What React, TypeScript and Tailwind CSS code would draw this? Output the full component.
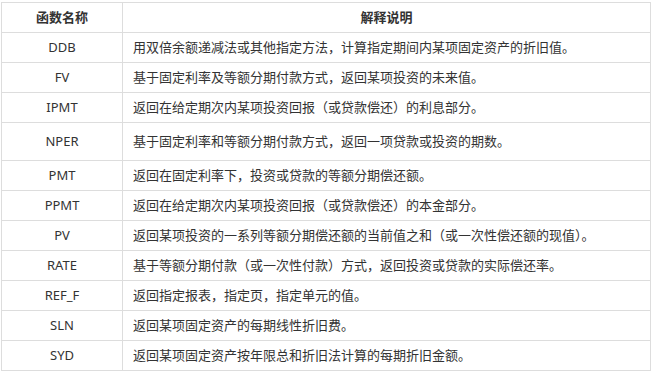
const rows: { name: string; desc: string; tall?: boolean }[] = [
  { name: "DDB", desc: "用双倍余额递减法或其他指定方法，计算指定期间内某项固定资产的折旧值。" },
  { name: "FV", desc: "基于固定利率及等额分期付款方式，返回某项投资的未来值。" },
  { name: "IPMT", desc: "返回在给定期次内某项投资回报（或贷款偿还）的利息部分。" },
  { name: "NPER", desc: "基于固定利率和等额分期付款方式，返回一项贷款或投资的期数。", tall: true },
  { name: "PMT", desc: "返回在固定利率下，投资或贷款的等额分期偿还额。" },
  { name: "PPMT", desc: "返回在给定期次内某项投资回报（或贷款偿还）的本金部分。" },
  { name: "PV", desc: "返回某项投资的一系列等额分期偿还额的当前值之和（或一次性偿还额的现值）。" },
  { name: "RATE", desc: "基于等额分期付款（或一次性付款）方式，返回投资或贷款的实际偿还率。" },
  { name: "REF_F", desc: "返回指定报表，指定页，指定单元的值。" },
  { name: "SLN", desc: "返回某项固定资产的每期线性折旧费。" },
  { name: "SYD", desc: "返回某项固定资产按年限总和折旧法计算的每期折旧金额。" },
];

export default function App() {
  return (
    <div className="h-[371px] w-[652px] bg-white pl-px pt-[2px] font-['Noto_Sans','Noto_Sans_CJK_SC',sans-serif] text-[13px] text-[#333]">
      <table className="w-[650px] table-fixed border-collapse">
        <colgroup>
          <col className="w-[121px]" />
          <col />
        </colgroup>
        <thead>
          <tr className="h-[30px]">
            <th className="border border-[#ddd] p-0 text-center font-bold">函数名称</th>
            <th className="border border-[#ddd] p-0 text-center font-bold">解释说明</th>
          </tr>
        </thead>
        <tbody>
          {rows.map((row) => (
            <tr key={row.name} className={row.tall ? "h-[38px]" : "h-[30px]"}>
              <td className="border border-[#ddd] p-0 text-center">{row.name}</td>
              <td className="border border-[#ddd] py-0 pl-[10px] pr-2 text-left">{row.desc}</td>
            </tr>
          ))}
        </tbody>
      </table>
    </div>
  );
}
